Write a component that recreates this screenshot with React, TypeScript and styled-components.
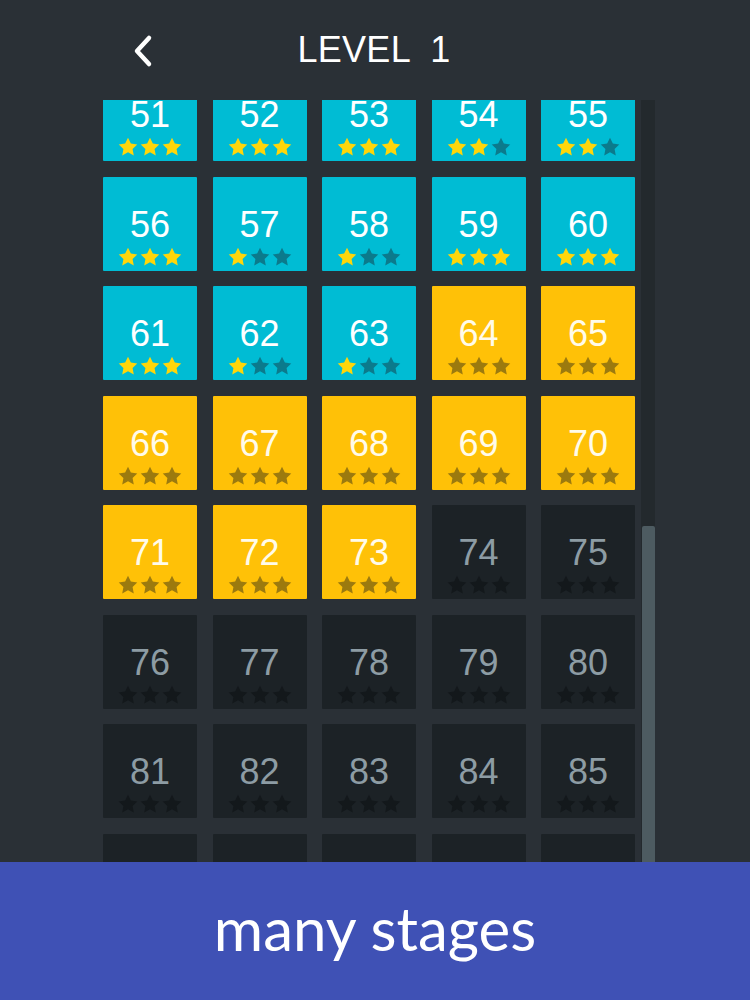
import React from "react";
import styled, { createGlobalStyle } from "styled-components";

type TileState = "cleared" | "open" | "locked";

type Level = {
  num: number;
  state: TileState;
  stars: number;
};

const Colors = {
  PAGE: "#2a3036",
  CYAN: "#00bcd4",
  AMBER: "#ffc107",
  LOCKED: "#1c2226",
  INDIGO: "#3f51b5",
  TRACK: "#23292d",
  THUMB: "#4d5b61",
};

const TILE_SIZE = 94;
const TILE_GAP = 15.5;
const SCROLL_OFFSET = 33;
const VIEWPORT_HEIGHT = 762;
const THUMB_TOP = 426;

// stars earned per cleared level, starting from 51
const CLEARED_STARS = [3, 3, 3, 2, 2, 3, 1, 1, 3, 3, 3, 1, 1];
const LAST_OPEN = 73;

const levels: Level[] = Array.from({ length: 40 }, (_v, i) => {
  const num = 51 + i;
  if (i < CLEARED_STARS.length) {
    return { num, state: "cleared", stars: CLEARED_STARS[i] };
  }
  return { num, state: num <= LAST_OPEN ? "open" : "locked", stars: 0 };
});

const tileBackground: Record<TileState, string> = {
  cleared: Colors.CYAN,
  open: Colors.AMBER,
  locked: Colors.LOCKED,
};

const numberColor: Record<TileState, string> = {
  cleared: "#ffffff",
  open: "#fffbea",
  locked: "#8d9ca4",
};

const starOff: Record<TileState, string> = {
  cleared: "#0b7a8c",
  open: "#9c7a0e",
  locked: "#13181b",
};

const GlobalStyle = createGlobalStyle`
  html, body {
    margin: 0;
    padding: 0;
    background: ${Colors.PAGE};
  }
  body {
    font-family: "Liberation Sans", Arial, sans-serif;
    overflow: hidden;
  }
`;

const Screen = styled.div`
  width: 750px;
  height: 1000px;
  display: flex;
  flex-direction: column;
  background: ${Colors.PAGE};
`;

const Header = styled.header`
  height: 100px;
  display: grid;
  grid-template-columns: 1fr auto 1fr;
  align-items: center;
`;

const BackButton = styled.button`
  justify-self: start;
  margin-left: 131px;
  margin-top: 2px;
  padding: 0;
  border: none;
  background: none;
  display: flex;
  cursor: pointer;
`;

const Title = styled.h1`
  margin: 0 0 0 -2px;
  color: #ffffff;
  font-size: 36px;
  font-weight: 400;
  white-space: pre;
  letter-spacing: 0.3px;
`;

const Body = styled.div`
  flex: 1;
  display: flex;
  align-items: flex-start;
  padding-left: 103px;
  gap: 6px;
`;

const Viewport = styled.div`
  width: ${TILE_SIZE * 5 + TILE_GAP * 4}px;
  height: ${VIEWPORT_HEIGHT}px;
  overflow: hidden;
`;

const Grid = styled.div`
  display: grid;
  grid-template-columns: repeat(5, ${TILE_SIZE}px);
  grid-auto-rows: ${TILE_SIZE}px;
  gap: ${TILE_GAP}px;
  margin-top: -${SCROLL_OFFSET}px;
`;

const Tile = styled.div<{ $state: TileState }>`
  display: flex;
  flex-direction: column;
  align-items: center;
  padding-top: 30px;
  box-sizing: border-box;
  background: ${(p) => tileBackground[p.$state]};
  border-radius: 1px;
`;

const TileNumber = styled.span<{ $state: TileState }>`
  font-size: 36px;
  line-height: 36px;
  color: ${(p) => numberColor[p.$state]};
`;

const Stars = styled.div`
  display: flex;
  margin-top: 3px;
`;

const Track = styled.div`
  position: relative;
  width: 14px;
  height: ${VIEWPORT_HEIGHT}px;
  background: ${Colors.TRACK};
`;

const Thumb = styled.div`
  position: absolute;
  left: 1px;
  right: 0;
  top: ${THUMB_TOP}px;
  bottom: 0;
  background: ${Colors.THUMB};
  border-radius: 2px 2px 0 0;
`;

const Banner = styled.footer`
  height: 138px;
  display: flex;
  align-items: center;
  justify-content: center;
  background: ${Colors.INDIGO};
  color: #ffffff;
  font-family: Lato, "Liberation Sans", sans-serif;
  font-weight: 400;
  font-size: 60px;
  padding-bottom: 6px;
  box-sizing: border-box;
`;

function Star({ color }: { color: string }) {
  return (
    <svg width="22" height="22" viewBox="0 0 24 24">
      <path
        d="M12 1.8l3.1 6.5 7 0.9-5.1 4.9 1.3 7.1L12 17.8l-6.3 3.4 1.3-7.1-5.1-4.9 7-0.9z"
        fill={color}
      />
    </svg>
  );
}

function LevelTile({ level }: { level: Level }) {
  return (
    <Tile $state={level.state}>
      <TileNumber $state={level.state}>{level.num}</TileNumber>
      <Stars>
        {[0, 1, 2].map((i) => (
          <Star
            key={i}
            color={i < level.stars ? "#ffd60a" : starOff[level.state]}
          />
        ))}
      </Stars>
    </Tile>
  );
}

export default function App() {
  return (
    <Screen>
      <GlobalStyle />
      <Header>
        <BackButton type="button" aria-label="back">
          <svg width="24" height="34" viewBox="0 0 24 34">
            <polyline
              points="18,4 6,17 18,30"
              fill="none"
              stroke="#ffffff"
              strokeWidth="4.5"
              strokeLinecap="round"
              strokeLinejoin="round"
            />
          </svg>
        </BackButton>
        <Title>{"LEVEL  1"}</Title>
        <span />
      </Header>
      <Body>
        <Viewport>
          <Grid>
            {levels.map((level) => (
              <LevelTile key={level.num} level={level} />
            ))}
          </Grid>
        </Viewport>
        <Track>
          <Thumb />
        </Track>
      </Body>
      <Banner>many stages</Banner>
    </Screen>
  );
}
